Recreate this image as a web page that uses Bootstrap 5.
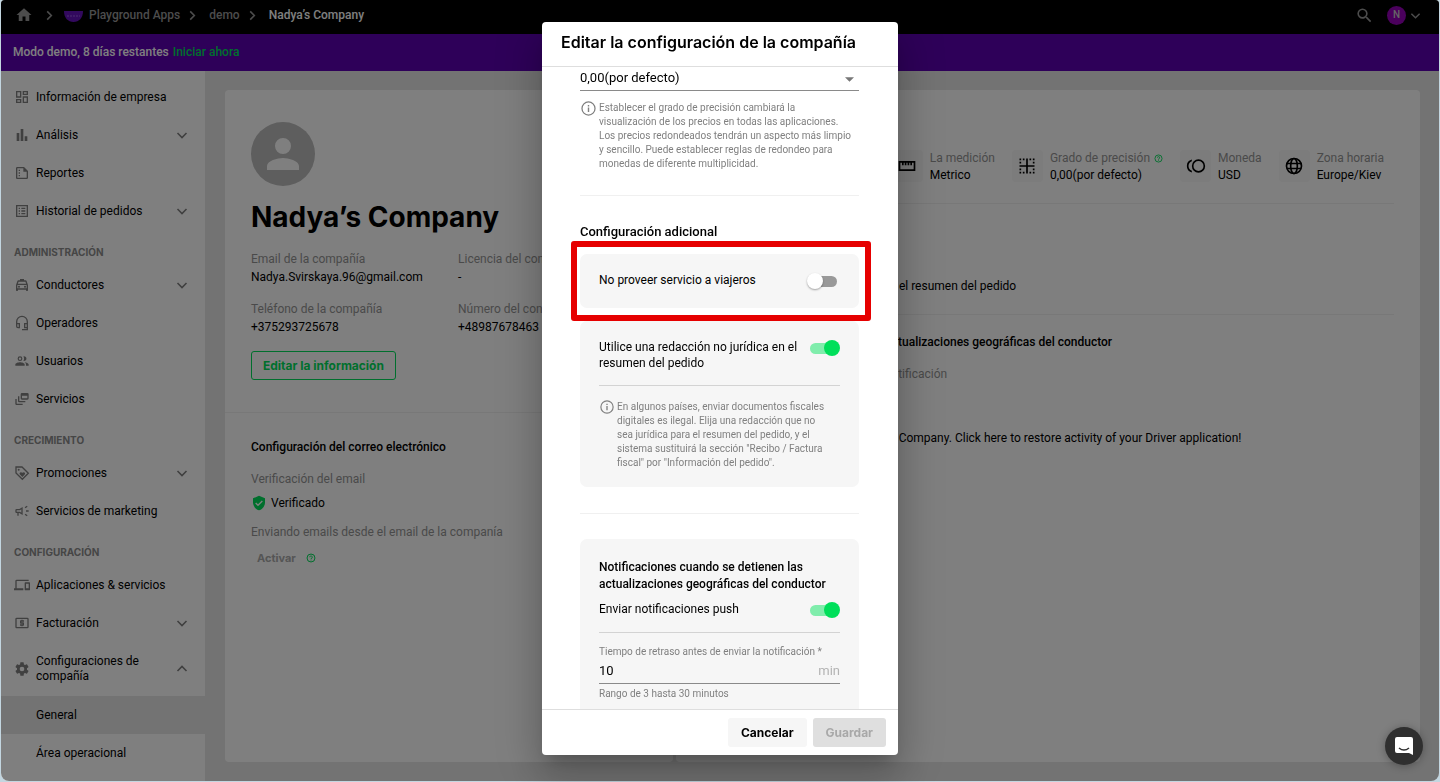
<!DOCTYPE html>
<html lang="es">
<head>
<meta charset="utf-8">
<meta name="viewport" content="width=device-width, initial-scale=1">
<title>Nadya’s Company</title>
<link href="https://cdn.jsdelivr.net/npm/bootstrap@5.3.0/dist/css/bootstrap.min.css" rel="stylesheet">
<style>
:root { --brand-green: #00df5a; --muted: #949494; --soft: #f6f6f6; }
html, body { height: 100%; }
body { background: #c3d6e0; color: #000; font-family: Roboto, sans-serif; font-size: 12px; line-height: 16px; overflow: hidden; }
svg { display: block; fill: currentColor; flex-shrink: 0; }
a { text-decoration: none; }
.geo { font-family: Inter, sans-serif; font-weight: 700; }
.muted { color: var(--muted); }
.green { color: var(--brand-green); }
.w500 { font-weight: 500; }

.app-window { height: calc(100% - 1px); margin: 0 1px; border-radius: 4px 4px 8px 8px; overflow: hidden; background: #e6e6e6; }
.top-bar { background: #000; height: 34px; padding: 0 18px 4px 14px; font-weight: 500; color: #999; }
.top-bar a { color: #999; }
.top-bar .current { color: #fff; }
.crumb-sep { margin: 0 11px 0 7px; }
.home-sep { margin: 0 8px 0 11px; }
.user-dot { width: 19px; height: 19px; margin: 0 4px 0 13px; background: #9400b8; color: #ccc; font-size: 10px; }
.demo-bar { background: #5c00b2; color: #fff; height: 37px; padding: 0 13px 2px 12px; }

.side-bar { width: 204px; background: #fff; padding-top: 7px; overflow: hidden; }
.side-bar a { color: #000; min-height: 38px; padding: 2px 17px 2px 13px; gap: 6px; }
.side-bar .two-line { min-height: 54px; line-height: 15px; }
.side-bar svg { color: #808080; }
.side-bar .active { background: #e6e6e6; }
.side-bar .sub { padding-left: 35px; }
.side-head { font-size: 10px; color: #8c8c8c; height: 36px; padding: 7px 13px 0; }

.main-area { padding: 19px 19px 19px 20px; gap: 3px; }
.info-card { background: #fff; border-radius: 4px; min-width: 0; }
.company-card { flex: 0 0 37.5%; }
.company-card section { padding: 32px 26px; }
.company-card .mail-section { padding-top: 26px; }
.avatar { width: 64px; height: 64px; background: #bcbcbc; color: #fff; }
.company-card h1 { font-size: 28px; line-height: 36px; margin: 13px 0 16px; }
.facts { display: grid; grid-template-columns: 207px 1fr; row-gap: 16px; white-space: nowrap; }
.facts dt, .spec dt { font-weight: 400; color: var(--muted); }
.facts dd { margin: 2px 0 0; }
.spec { white-space: nowrap; }
.spec dd { margin: 1px 0 0; }
.btn-edit { height: 29px; border: 1px solid var(--brand-green); color: var(--brand-green); font-size: 12px; line-height: 16px; padding: 0 11px; border-radius: 3px; }
.mail-label { margin-top: 16px; }
.mail-sending { margin-top: 13px; }
.activate-row { margin-top: 10px; padding-left: 6px; gap: 10px; font-size: 11px; }
.activate-row button { border: 0; background: none; padding: 0; color: #aaa; }
.rule { border: 0; border-top: 1px solid #f0f0f0; opacity: 1; margin: 0; }
.detail-card { padding: 60px 26px 0; white-space: nowrap; overflow: hidden; }
.spec-row { gap: 17px; padding: 0 10px 20px 0; }
.spec-item { gap: 7px; }
.spec-icon { width: 31px; height: 32px; background: #f8f8f8; border-radius: 4px; }
.detail-card p { margin: 0; padding-left: 8px; }
.detail-card .wording { margin: 74px 0 20px; }
.detail-card .geo-title { margin-top: 19px; }

.modal-backdrop { position: absolute; inset: 0; width: auto; height: auto; }
.modal-dialog { max-width: 356px; margin: 22px auto 27px; height: calc(100% - 49px); }
.modal-content { border: 0; border-radius: 4px; color: #000; max-height: 100%; height: 100%; box-shadow: 0 11px 15px -7px rgba(0,0,0,.2), 0 24px 38px 3px rgba(0,0,0,.14), 0 9px 46px 8px rgba(0,0,0,.12); }
.modal-header { padding: 0 19px 4px; height: 45px; border-bottom: 1px solid #dedede; border-radius: 0; }
.modal-title { font-size: 16px; line-height: 20px; font-weight: 600; white-space: nowrap; }
.modal-body { padding: 0 39px 0 38px; scrollbar-width: none; overflow-x: hidden; }
.modal-body::-webkit-scrollbar { display: none; }
.modal-footer { padding: 8px 12px; gap: 6px; border-top: 1px solid #dedede; }
.modal-footer .btn { margin: 0; height: 29px; font-size: 12px; line-height: 16px; padding: 0 13px; border: 0; border-radius: 3px; }
.btn-cancel, .btn-cancel:hover { background: var(--soft); color: #000; }
.btn-save:disabled { background: #dfdfdf; color: #a8a8a8; opacity: 1; }
.line-select, .line-input { border: 0; border-bottom: 1px solid #8a8a8a; border-radius: 0; background-color: transparent; padding: 0; box-shadow: none; color: #000; font-size: 13px; }
.line-select { height: 24px; line-height: 20px; padding: 0 0 1px; background-image: url("data:image/svg+xml,%3Csvg xmlns='http://www.w3.org/2000/svg' viewBox='0 0 10 5'%3E%3Cpath d='M0 0h10L5 5z' fill='%23777'/%3E%3C/svg%3E"); background-position: right 5px top 10px; background-size: 9px 5px; }
.hint { font-size: 10px; line-height: 14px; color: #808080; }
.hint.d-flex { gap: 2px; }
.hint svg { margin-top: -1px; }
.precision-hint { margin-top: 10px; }
.section-name { font-size: 13px; line-height: 16px; font-weight: 500; margin: 28px 0 14px; }
.opt-card { background: var(--soft); border-radius: 7px; padding: 18px 19px 17px; }
.opt-card hr { border: 0; border-top: 1px solid #d3d3d3; opacity: 1; margin: 14px 0; }
.solo-card { height: 54px; padding-top: 0; padding-bottom: 2px; margin-bottom: 13px; }
.red-frame { position: absolute; inset: -13px -12px -13px -9px; border: 6px solid #e60000; border-radius: 3px; pointer-events: none; z-index: 1; }
.section-rule { margin: 26px 0 25px; }
.card-name { font-size: 12px; line-height: 17px; font-weight: 500; margin: 2px 0 8px; }
.delay-label { margin-top: 12px; }
.unit { font-size: 13px; color: #b3b3b3; }
.range-hint { margin-top: 3px; }
.slider-switch { appearance: none; width: 33px; height: 16px; margin: 1px 0 0; position: relative; flex-shrink: 0; }
.slider-switch::before { content: ""; position: absolute; inset: 3px 3px 2px; border-radius: 6px; background: #999; }
.slider-switch::after { content: ""; position: absolute; width: 16px; height: 16px; border-radius: 50%; left: 0; top: 0; background: #fff; box-shadow: 0 1px 2px rgba(0,0,0,.35); }
.slider-switch:checked::before { background: #80edac; }
.slider-switch:checked::after { left: auto; right: 0; background: var(--brand-green); box-shadow: none; }
.line-field { border-bottom: 1px solid #8a8a8a; height: 25px; }
.line-field .line-input { border: 0; width: 100%; min-width: 0; outline: 0; }
.chat-btn { position: fixed; right: 17px; bottom: 17px; width: 38px; height: 38px; background: #2f2f2f; color: #fff; z-index: 1060; box-shadow: 0 1px 8px rgba(0,0,0,.3); border: 0; }
</style>
</head>
<body>
<svg width="0" height="0" class="position-absolute" aria-hidden="true">
  <symbol id="home" viewBox="0 0 24 24"><path d="M10 20v-6h4v6h5v-8h3L12 3 2 12h3v8z"/></symbol>
  <symbol id="right" viewBox="0 0 24 24"><path d="M7 3l9 9-9 9" fill="none" stroke="currentColor" stroke-width="3.500"/></symbol>
  <symbol id="down" viewBox="0 0 12 12"><path d="M1.500 4L6 8.500 10.500 4" fill="none" stroke="currentColor" stroke-width="1.600"/></symbol>
  <symbol id="up" viewBox="0 0 12 12"><path d="M1.500 8L6 3.500 10.500 8" fill="none" stroke="currentColor" stroke-width="1.600"/></symbol>
  <symbol id="search" viewBox="0 0 24 24"><path d="M15.500 14h-.79l-.28-.27A6.471 6.471 0 0 0 16 9.500 6.500 6.500 0 1 0 9.500 16c1.610 0 3.090-.59 4.230-1.570l.27.28v.79l5 4.990L20.490 19l-4.990-5zm-6 0C7.010 14 5 11.990 5 9.500S7.010 5 9.500 5 14 7.010 14 9.500 11.990 14 9.500 14z"/></symbol>
  <symbol id="dash" viewBox="0 0 24 24"><path d="M19 5v2h-4V5h4M9 5v6H5V5h4m10 8v6h-4v-6h4M9 17v2H5v-2h4M21 3h-8v6h8V3zM11 3H3v10h8V3zm10 8h-8v10h8V11zm-10 4H3v6h8v-6z"/></symbol>
  <symbol id="bars" viewBox="0 0 24 24"><path d="M4 9h4v12H4zm6-6h4v18h-4zm6 11h4v7h-4z"/></symbol>
  <symbol id="report" viewBox="0 0 24 24"><path d="M15 3H5a2 2 0 0 0-2 2v14c0 1.100.9 2 2 2h14a2 2 0 0 0 2-2V9l-6-6zM5 19V5h9v5h5v9H5zM7 7h2v2H7zm0 4h2v2H7zm0 4h2v2H7z"/></symbol>
  <symbol id="list" viewBox="0 0 24 24"><path d="M3 3v18h18V3H3zm16 16H5V5h14v14zM11 7h6v2h-6zm0 4h6v2h-6zm0 4h6v2h-6zM7 7h2v2H7zm0 4h2v2H7zm0 4h2v2H7z"/></symbol>
  <symbol id="taxi" viewBox="0 0 24 24"><path d="M18.920 6.010C18.720 5.420 18.160 5 17.500 5H15V3H9v2H6.500c-.66 0-1.210.42-1.420 1.010L3 12v8c0 .55.45 1 1 1h1c.55 0 1-.45 1-1v-1h12v1c0 .55.45 1 1 1h1c.55 0 1-.45 1-1v-8l-2.080-5.990zM6.850 7h10.290l1.040 3H5.810l1.040-3zM19 17H5v-5h14v5z"/><circle cx="7.500" cy="14.500" r="1.500"/><circle cx="16.500" cy="14.500" r="1.500"/></symbol>
  <symbol id="headset" viewBox="0 0 24 24"><path d="M4 14v-4a8 8 0 0 1 16 0v12h-8M4 13h4v6H6a2 2 0 0 1-2-2zM20 13h-4v6h4" fill="none" stroke="currentColor" stroke-width="2"/></symbol>
  <symbol id="people" viewBox="0 0 24 24"><circle cx="9" cy="8.500" r="2.700" fill="none" stroke="currentColor" stroke-width="1.800"/><path d="M14 5.200a3.500 3.500 0 1 1 0 6.600c1.500-2 1.500-4.600 0-6.600zM9 13.750c-2.340 0-7 1.170-7 3.500V19h14v-1.750c0-2.330-4.660-3.500-7-3.500zM16.040 13.810c1.160.84 1.960 1.960 1.960 3.440V19h4v-1.750c0-2.020-3.500-3.170-5.960-3.440z"/></symbol>
  <symbol id="feed" viewBox="0 0 24 24"><path d="M8 8H6v7c0 1.100.9 2 2 2h9v-2H8zM20 3h-8a2 2 0 0 0-2 2v6c0 1.100.9 2 2 2h8a2 2 0 0 0 2-2V5a2 2 0 0 0-2-2zm0 8h-8V7h8zM4 12H2v7c0 1.100.9 2 2 2h9v-2H4z"/></symbol>
  <symbol id="tag" viewBox="0 0 24 24"><path d="M3 3h9l9.500 9.500-9 9L3 12z" fill="none" stroke="currentColor" stroke-width="2"/><circle cx="7" cy="7" r="1.500"/><path d="M12.500 18l-3.600-3.700c-1.900-2.200 1.200-5 3.600-2.500 2.400-2.500 5.500.3 3.600 2.500z"/></symbol>
  <symbol id="horn" viewBox="0 0 24 24"><path d="M18 11v2h4v-2zM16 17.610l3.200 2.390 1.200-1.600-3.200-2.400zM20.400 5.600L19.200 4 16 6.400 17.200 8zM4 9a2 2 0 0 0-2 2v2c0 1.100.9 2 2 2h1v4h2v-4h1l5 3V6L8 9zm5.030 1.710L11 9.530v4.940l-1.970-1.180-.48-.29H4v-2h4.550z"/></symbol>
  <symbol id="devices" viewBox="0 0 24 24"><path d="M4 6h18V4H4a2 2 0 0 0-2 2v11H0v3h14v-3H4zm19 2h-6a1 1 0 0 0-1 1v10c0 .55.45 1 1 1h6a1 1 0 0 0 1-1V9a1 1 0 0 0-1-1zm-1 9h-4v-7h4z"/></symbol>
  <symbol id="cash" viewBox="0 0 24 24"><path d="M11 17h2v-1h1a1 1 0 0 0 1-1v-3a1 1 0 0 0-1-1h-3v-1h4V8h-2V7h-2v1h-1a1 1 0 0 0-1 1v3c0 .55.45 1 1 1h3v1H9v2h2zM20 4H4a2 2 0 0 0-2 2v12c0 1.110.89 2 2 2h16a2 2 0 0 0 2-2V6a2 2 0 0 0-2-2zm0 14H4V6h16z"/></symbol>
  <symbol id="gear" viewBox="0 0 24 24"><path d="M19.430 12.980c.04-.32.07-.64.07-.98s-.03-.66-.07-.98l2.110-1.650c.19-.15.24-.42.12-.64l-2-3.460c-.12-.22-.39-.3-.61-.22l-2.490 1c-.52-.4-1.080-.73-1.690-.98l-.38-2.650A.488.488 0 0 0 14 2h-4c-.25 0-.46.18-.49.42l-.38 2.650c-.61.25-1.170.59-1.690.98l-2.490-1c-.23-.09-.49 0-.61.22l-2 3.460c-.13.22-.07.49.12.64l2.110 1.650c-.04.32-.07.65-.07.98s.03.66.07.98l-2.110 1.650c-.19.15-.24.42-.12.64l2 3.460c.12.22.39.3.61.22l2.490-1c.52.4 1.080.73 1.690.98l.38 2.650c.03.24.24.42.49.42h4c.25 0 .46-.18.49-.42l.38-2.650c.61-.25 1.170-.59 1.690-.98l2.490 1c.23.09.49 0 .61-.22l2-3.460c.12-.22.07-.49-.12-.64zM12 15.500a3.500 3.500 0 1 1 0-7 3.500 3.500 0 0 1 0 7z"/></symbol>
  <symbol id="person" viewBox="0 0 24 24"><path d="M12 12a4 4 0 1 0 0-8 4 4 0 0 0 0 8zm0 2c-2.670 0-8 1.340-8 4v2h16v-2c0-2.660-5.330-4-8-4z"/></symbol>
  <symbol id="shield" viewBox="0 0 24 24"><path d="M12 1L3 5v6c0 5.550 3.840 10.740 9 12 5.160-1.260 9-6.450 9-12V5z"/><path d="M7 12l3.500 3.500L17 9" fill="none" stroke="#fff" stroke-width="2"/></symbol>
  <symbol id="info" viewBox="0 0 24 24"><circle cx="12" cy="12" r="9.200" fill="none" stroke="currentColor" stroke-width="1.800"/><path d="M11 10.500h2V17h-2zM11 7h2v2h-2z"/></symbol>
  <symbol id="help" viewBox="0 0 24 24"><circle cx="12" cy="12" r="9.500" fill="none" stroke="currentColor" stroke-width="2.400"/><path d="M11 18h2v-2h-2zM12 6a4 4 0 0 0-4 4h2a2 2 0 1 1 4 0c0 2-3 1.750-3 5h2c0-2.250 3-2.500 3-5a4 4 0 0 0-4-4z"/></symbol>
  <symbol id="ruler" viewBox="0 0 24 24"><path d="M3 7h18v10H3zM7 7v4M10.300 7v4M13.700 7v4M17 7v4" fill="none" stroke="currentColor" stroke-width="2"/></symbol>
  <symbol id="grid" viewBox="0 0 24 24"><path d="M11 3h2v8h8v2h-8v8h-2v-8H3v-2h8z"/><path d="M3 4h6.500M15 4h6.500M3 20h6.500M15 20h6.500" stroke="currentColor" stroke-width="2" stroke-dasharray="2 2"/><path d="M4 7v2M4 15v2M20 7v2M20 15v2" stroke="currentColor" stroke-width="2"/></symbol>
  <symbol id="toll" viewBox="0 0 24 24"><circle cx="15" cy="12" r="7" fill="none" stroke="currentColor" stroke-width="2"/><path d="M3 12c0-2.610 1.670-4.830 4-5.650V4.260a8 8 0 0 0 0 15.480v-2.090c-2.330-.82-4-3.040-4-5.650z"/></symbol>
  <symbol id="globe" viewBox="0 0 24 24"><g fill="none" stroke="currentColor" stroke-width="2"><circle cx="12" cy="12" r="9"/><ellipse cx="12" cy="12" rx="4" ry="9"/><path d="M3.500 9h17M3.500 15h17"/></g></symbol>
</svg>

<div class="app-window position-relative d-flex flex-column">
  <header class="top-bar d-flex align-items-center">
    <a href="#" aria-label="Inicio"><svg width="18" height="18"><use href="#home"/></svg></a>
    <svg class="home-sep" width="11" height="11"><use href="#right"/></svg>
    <svg width="22" height="22" viewBox="0 0 22 22"><path d="M1 7h19c0 7-4 11-9.500 11S1 14 1 7z" fill="#6412bd"/><path d="M4 12h13" stroke="#9a5ee0" stroke-dasharray="2 1"/></svg>
    <a href="#" class="ms-1">Playground Apps</a>
    <svg class="crumb-sep" width="11" height="11"><use href="#right"/></svg>
    <a href="#">demo</a>
    <svg class="crumb-sep" width="11" height="11"><use href="#right"/></svg>
    <span class="current">Nadya’s Company</span>
    <svg class="ms-auto" width="19" height="19"><use href="#search"/></svg>
    <span class="user-dot rounded-circle d-flex align-items-center justify-content-center">N</span>
    <svg width="11" height="11"><use href="#down"/></svg>
  </header>
  <div class="demo-bar d-flex align-items-center gap-1 w500">
    <span>Modo demo, 8 días restantes</span><a href="#" class="green">Iniciar ahora</a>
  </div>

  <div class="d-flex flex-grow-1 overflow-hidden">
    <nav class="side-bar flex-shrink-0">
      <a href="#" class="d-flex align-items-center"><svg width="16" height="16"><use href="#dash"/></svg>Información de empresa</a>
      <a href="#" class="d-flex align-items-center"><svg width="16" height="16"><use href="#bars"/></svg><span class="me-auto">Análisis</span><svg width="12" height="12"><use href="#down"/></svg></a>
      <a href="#" class="d-flex align-items-center"><svg width="16" height="16"><use href="#report"/></svg>Reportes</a>
      <a href="#" class="d-flex align-items-center"><svg width="16" height="16"><use href="#list"/></svg><span class="me-auto">Historial de pedidos</span><svg width="12" height="12"><use href="#down"/></svg></a>
      <div class="side-head geo d-flex align-items-center">ADMINISTRACIÓN</div>
      <a href="#" class="d-flex align-items-center"><svg width="16" height="16"><use href="#taxi"/></svg><span class="me-auto">Conductores</span><svg width="12" height="12"><use href="#down"/></svg></a>
      <a href="#" class="d-flex align-items-center"><svg width="16" height="16"><use href="#headset"/></svg>Operadores</a>
      <a href="#" class="d-flex align-items-center"><svg width="16" height="16"><use href="#people"/></svg>Usuarios</a>
      <a href="#" class="d-flex align-items-center"><svg width="16" height="16"><use href="#feed"/></svg>Servicios</a>
      <div class="side-head geo d-flex align-items-center">CRECIMIENTO</div>
      <a href="#" class="d-flex align-items-center"><svg width="16" height="16"><use href="#tag"/></svg><span class="me-auto">Promociones</span><svg width="12" height="12"><use href="#down"/></svg></a>
      <a href="#" class="d-flex align-items-center"><svg width="16" height="16"><use href="#horn"/></svg>Servicios de marketing</a>
      <div class="side-head geo d-flex align-items-center">CONFIGURACIÓN</div>
      <a href="#" class="d-flex align-items-center"><svg width="16" height="16"><use href="#devices"/></svg>Aplicaciones &amp; servicios</a>
      <a href="#" class="d-flex align-items-center"><svg width="16" height="16"><use href="#cash"/></svg><span class="me-auto">Facturación</span><svg width="12" height="12"><use href="#down"/></svg></a>
      <a href="#" class="d-flex align-items-center two-line"><svg width="16" height="16"><use href="#gear"/></svg><span class="me-auto">Configuraciones de<br>compañía</span><svg width="12" height="12"><use href="#up"/></svg></a>
      <a href="#" class="d-flex align-items-center sub active">General</a>
      <a href="#" class="d-flex align-items-center sub">Área operacional</a>
    </nav>

    <main class="main-area d-flex flex-grow-1 overflow-hidden">
      <div class="info-card company-card">
        <section>
          <div class="avatar rounded-circle d-flex align-items-center justify-content-center"><svg width="48" height="48"><use href="#person"/></svg></div>
          <h1 class="geo">Nadya’s Company</h1>
          <dl class="facts mb-0">
            <div><dt>Email de la compañía</dt><dd>Nadya.Svirskaya.96@gmail.com</dd></div>
            <div><dt>Licencia del conductor</dt><dd>-</dd></div>
            <div><dt>Teléfono de la compañía</dt><dd>+375293725678</dd></div>
            <div><dt>Número del contacto</dt><dd>+48987678463</dd></div>
          </dl>
          <button type="button" class="btn btn-edit geo mt-3">Editar la información</button>
        </section>
        <hr class="rule">
        <section class="mail-section">
          <div class="w500">Configuración del correo electrónico</div>
          <div class="muted mail-label">Verificación del email</div>
          <div class="d-flex align-items-center mt-2"><svg class="green me-1" width="16" height="16"><use href="#shield"/></svg>Verificado</div>
          <div class="muted mail-sending">Enviando emails desde el email de la companía</div>
          <div class="activate-row d-flex align-items-center"><button type="button" class="geo" disabled>Activar</button><svg class="green" width="10" height="10"><use href="#help"/></svg></div>
        </section>
      </div>
      <div class="info-card detail-card flex-grow-1">
        <div class="spec-row d-flex justify-content-end">
          <div class="spec-item d-flex"><span class="spec-icon d-flex align-items-center justify-content-center"><svg width="20" height="20"><use href="#ruler"/></svg></span><dl class="spec mb-0"><dt>La medición</dt><dd>Metrico</dd></dl></div>
          <div class="spec-item d-flex"><span class="spec-icon d-flex align-items-center justify-content-center"><svg width="20" height="20"><use href="#grid"/></svg></span><dl class="spec mb-0"><dt class="d-flex align-items-center gap-1">Grado de precisión <svg class="green" width="9" height="9"><use href="#help"/></svg></dt><dd>0,00(por defecto)</dd></dl></div>
          <div class="spec-item d-flex"><span class="spec-icon d-flex align-items-center justify-content-center"><svg width="20" height="20"><use href="#toll"/></svg></span><dl class="spec mb-0"><dt>Moneda</dt><dd>USD</dd></dl></div>
          <div class="spec-item d-flex"><span class="spec-icon d-flex align-items-center justify-content-center"><svg width="20" height="20"><use href="#globe"/></svg></span><dl class="spec mb-0"><dt>Zona horaria</dt><dd>Europe/Kiev</dd></dl></div>
        </div>
        <hr class="rule">
        <p class="wording">Utilice una redacción no jurídica en el resumen del pedido</p>
        <hr class="rule">
        <p class="w500 geo-title">Notificaciones cuando paran las actualizaciones geográficas del conductor</p>
        <p class="muted mt-3">Tiempo de retraso para enviar la notificación</p>
        <p class="mt-5">Driver app was inactive for Nadya’s Company. Click here to restore activity of your Driver application!</p>
      </div>
    </main>
  </div>
  <div class="modal-backdrop show"></div>
</div>

<div class="modal d-block" tabindex="-1" role="dialog" aria-labelledby="dlgTitle">
  <div class="modal-dialog modal-dialog-scrollable">
    <div class="modal-content">
      <div class="modal-header"><h2 class="modal-title geo" id="dlgTitle">Editar la configuración de la compañía</h2></div>
      <div class="modal-body">
        <select class="form-select line-select" aria-label="Grado de precisión"><option>0,00(por defecto)</option></select>
        <div class="hint precision-hint d-flex"><svg width="17" height="17"><use href="#info"/></svg><span>Establecer el grado de precisión cambiará la<br>visualización de los precios en todas las aplicaciones.<br>Los precios redondeados tendrán un aspecto más limpio<br>y sencillo. Puede establecer reglas de redondeo para<br>monedas de diferente multiplicidad.</span></div>
        <hr class="rule mt-4">
        <h3 class="section-name">Configuración adicional</h3>
        <div class="opt-card solo-card position-relative d-flex align-items-center justify-content-between">
          <label for="noService">No proveer servicio a viajeros</label>
          <input class="slider-switch" type="checkbox" role="switch" id="noService">
          <div class="red-frame"></div>
        </div>
        <div class="opt-card">
          <div class="d-flex justify-content-between">
            <label for="legal">Utilice una redacción no jurídica en el<br>resumen del pedido</label>
            <input class="slider-switch" type="checkbox" role="switch" id="legal" checked>
          </div>
          <hr>
          <div class="hint d-flex"><svg width="16" height="16"><use href="#info"/></svg><span>En algunos países, enviar documentos fiscales<br>digitales es ilegal. Elija una redacción que no<br>sea jurídica para el resumen del pedido, y el<br>sistema sustituirá la sección "Recibo / Factura<br>fiscal" por "Información del pedido".</span></div>
        </div>
        <hr class="rule section-rule">
        <div class="opt-card">
          <h3 class="card-name">Notificaciones cuando se detienen las<br>actualizaciones geográficas del conductor</h3>
          <div class="d-flex justify-content-between">
            <label for="push">Enviar notificaciones push</label>
            <input class="slider-switch" type="checkbox" role="switch" id="push" checked>
          </div>
          <hr class="mb-0">
          <label class="hint d-block delay-label" for="delay">Tiempo de retraso antes de enviar la notificación *</label>
          <div class="line-field d-flex align-items-center"><input class="line-input" id="delay" type="text" value="10"><span class="unit">min</span></div>
          <div class="hint range-hint">Rango de 3 hasta 30 minutos</div>
        </div>
      </div>
      <div class="modal-footer">
        <button type="button" class="btn btn-cancel geo">Cancelar</button>
        <button type="button" class="btn btn-save geo" disabled>Guardar</button>
      </div>
    </div>
  </div>
</div>
<button type="button" class="chat-btn rounded-circle d-flex align-items-center justify-content-center" aria-label="Chat">
  <svg width="20" height="20" viewBox="0 0 20 20"><path d="M3 1h14a2 2 0 0 1 2 2v16l-4-2H3a2 2 0 0 1-2-2V3a2 2 0 0 1 2-2z"/><path d="M5 12c3 2.500 7 2.500 10 0" fill="none" stroke="#2f2f2f" stroke-width="1.500"/></svg>
</button>
<script src="https://cdn.jsdelivr.net/npm/bootstrap@5.3.0/dist/js/bootstrap.bundle.min.js"></script>
</body>
</html>
